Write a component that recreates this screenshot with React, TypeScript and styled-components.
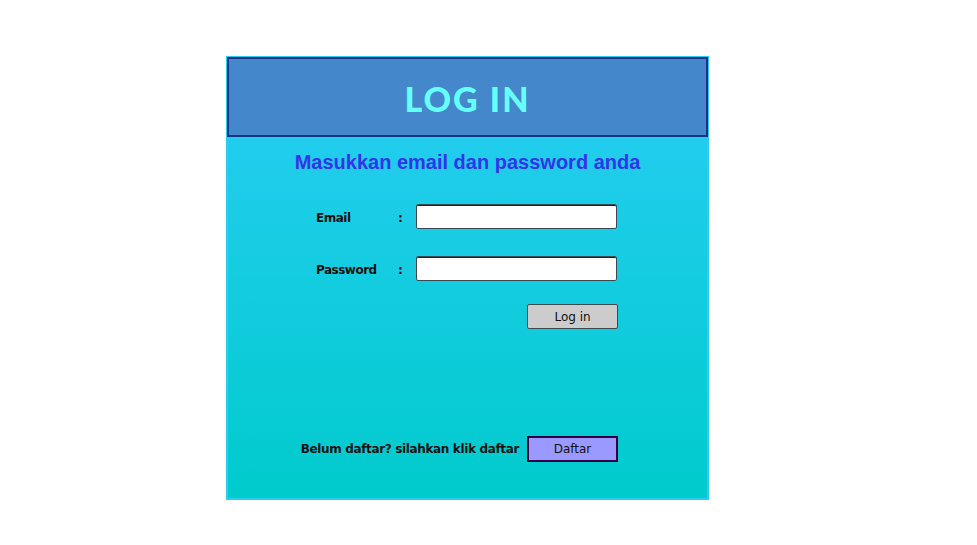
import React from "react";
import styled, { createGlobalStyle } from "styled-components";

const GlobalStyle = createGlobalStyle`
  html, body {
    margin: 0;
    padding: 0;
    background: #ffffff;
  }
`;

function App() {
  return (
    <>
      <GlobalStyle />
      <Page>
        <Panel>
          <Header>
            <Title>LOG IN</Title>
          </Header>
          <Subtitle>Masukkan email dan password anda</Subtitle>
          <Form>
            <FieldRow>
              <Label>Email</Label>
              <Colon>:</Colon>
              <Input type="text" />
            </FieldRow>
            <FieldRow $top={27}>
              <Label>Password</Label>
              <Colon>:</Colon>
              <Input type="password" />
            </FieldRow>
            <ActionRow>
              <Button $variant="login">Log in</Button>
            </ActionRow>
          </Form>
          <Footer>
            <FooterText>Belum daftar? silahkan klik daftar</FooterText>
            <Button $variant="register">Daftar</Button>
          </Footer>
        </Panel>
      </Page>
    </>
  );
}

const Page = styled.div`
  padding: 56px 0 0 226px;
`;

const Panel = styled.div`
  width: 481px;
  height: 442px;
  border: 1px solid #29cdf5;
  box-shadow: inset 1px 0 #29cdf5, inset -1px 0 #29cdf5, inset 0 -1px #29cdf5;
  background: linear-gradient(180deg, #29cdf5 0%, #00cbcc 100%);
  display: flex;
  flex-direction: column;
  font-family: "Comic Sans MS", "DejaVu Sans", sans-serif;
`;

const Header = styled.div`
  height: 76px;
  background: #4487cb;
  border: 2px solid #1b3287;
  display: flex;
  align-items: center;
  justify-content: center;
`;

const Title = styled.h1`
  margin: 0;
  padding-top: 2px;
  font-family: "Comic Sans MS", "Lato", sans-serif;
  font-weight: 900;
  font-size: 34px;
  letter-spacing: 2px;
  color: #66ffff;
`;

const Subtitle = styled.h2`
  margin: 14px 0 0;
  text-align: center;
  font-family: "Liberation Sans", Arial, sans-serif;
  font-weight: 700;
  font-size: 20px;
  line-height: 23px;
  color: #3333ee;
`;

const Form = styled.div`
  display: flex;
  flex-direction: column;
  padding: 30px 90px 0 89px;
`;

const FieldRow = styled.div<{ $top?: number }>`
  display: grid;
  grid-template-columns: 82px 18px 1fr;
  align-items: center;
  margin-top: ${(p) => p.$top ?? 0}px;
`;

const Label = styled.span`
  font-family: "DejaVu Sans", sans-serif;
  font-weight: 700;
  font-size: 12px;
  letter-spacing: -0.5px;
  padding-top: 2px;
  color: #111111;
`;

const Colon = styled(Label)``;

const Input = styled.input`
  box-sizing: border-box;
  width: 201px;
  height: 25px;
  border: 1px solid #3a4a50;
  border-radius: 2px;
  background: #ffffff;
  box-shadow: inset 0 1px 0 #222;
  outline: none;
`;

const ActionRow = styled.div`
  display: flex;
  justify-content: flex-end;
  margin-top: 23px;
`;

const Button = styled.button<{ $variant: "login" | "register" }>`
  box-sizing: border-box;
  width: 91px;
  height: ${(p) => (p.$variant === "login" ? 25 : 26)}px;
  padding: 0;
  font-family: "DejaVu Sans", sans-serif;
  font-size: 12px;
  color: #111111;
  cursor: pointer;
  background: ${(p) => (p.$variant === "login" ? "#cccccc" : "#9999ff")};
  border: ${(p) =>
    p.$variant === "login" ? "1px solid #3d4a4e" : "2px solid #330044"};
  border-radius: ${(p) => (p.$variant === "login" ? 2 : 0)}px;
`;

const Footer = styled.div`
  display: flex;
  justify-content: flex-end;
  align-items: center;
  gap: 8px;
  margin-top: auto;
  padding: 0 90px 37px 0;
`;

const FooterText = styled.span`
  font-family: "DejaVu Sans", sans-serif;
  font-weight: 700;
  font-size: 12px;
  letter-spacing: -0.35px;
  color: #111111;
`;

export default App;
